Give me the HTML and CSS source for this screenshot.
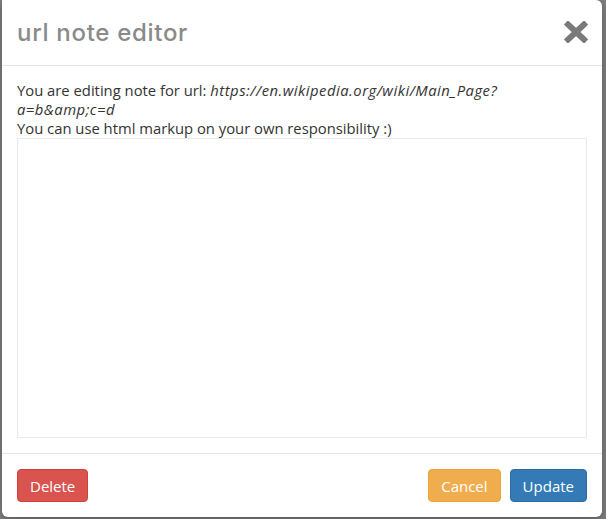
FILE: index.html
```html
<!DOCTYPE html>
<html>
<head>
<meta charset="utf-8">
<link rel="stylesheet" href="styles.css">
</head>
<body>
<div class="modal">
  <div class="modal-header">
    <h4 class="modal-title">url note editor</h4>
    <button class="close" aria-label="Close">
      <svg width="24" height="22" viewBox="0 0 24 22"><path d="M4 3.5 L20 18.5 M20 3.5 L4 18.5" stroke="#7a7a7a" stroke-width="6" stroke-linecap="square" fill="none"/></svg>
    </button>
  </div>
  <div class="modal-body">
    <div class="info">You are editing note for url: <i class="url">https://en.wikipedia.org/wiki/Main_Page?<br>a=b&amp;amp;c=d</i></div>
    <div class="info">You can use html markup on your own responsibility :)</div>
    <textarea class="note"></textarea>
  </div>
  <div class="modal-footer">
    <button class="btn btn-danger">Delete</button>
    <div class="spacer"></div>
    <button class="btn btn-warning">Cancel</button>
    <button class="btn btn-primary">Update</button>
  </div>
</div>
</body>
</html>
```
FILE: styles.css
```css
html, body {
  margin: 0;
  padding: 0;
  height: 100%;
}
body {
  background: #7f7f7f;
  font-family: "Open Sans", "Noto Sans", sans-serif;
  font-size: 14.8px;
  color: #333;
  overflow: hidden;
}
.modal {
  margin-left: 2px;
  width: 600px;
  background: #fff;
  border-radius: 0 6px 6px 6px;
  box-shadow: 0 3px 9px rgba(0,0,0,.3);
}
.modal-header {
  display: flex;
  align-items: center;
  justify-content: space-between;
  padding: 15px 14px 15px 15px;
  height: 35px;
  border-bottom: 1px solid #e5e5e5;
}
.modal-title {
  margin: 0;
  font-family: "Inter", sans-serif;
  font-weight: 500;
  font-size: 24px;
  color: #8a8a8a;
  letter-spacing: 0.7px;
}
.close {
  border: 0;
  background: none;
  padding: 0;
  margin-top: -2px;
  display: flex;
}
.modal-body {
  padding: 15px;
}
.info {
  line-height: 19px;
}
.url {
  letter-spacing: 0.5px;
}
.note {
  display: block;
  box-sizing: border-box;
  width: 570px;
  height: 300px;
  margin: 0;
  border: 1px solid #e8e8e8;
  resize: none;
  outline: none;
}
.modal-footer {
  display: flex;
  gap: 9px;
  padding: 15px;
  border-top: 1px solid #e5e5e5;
}
.spacer { flex: 1; }
.btn {
  font-family: "Open Sans", "Noto Sans", sans-serif;
  font-size: 15px;
  height: 33px;
  padding: 0 12px;
  border-radius: 4px;
  border: 1px solid transparent;
  color: #fff;
}
.btn-danger { background: #d9534f; border-color: #d43f3a; }
.btn-warning { background: #f0ad4e; border-color: #eea236; }
.btn-primary { background: #337ab7; border-color: #2e6da4; }
```
